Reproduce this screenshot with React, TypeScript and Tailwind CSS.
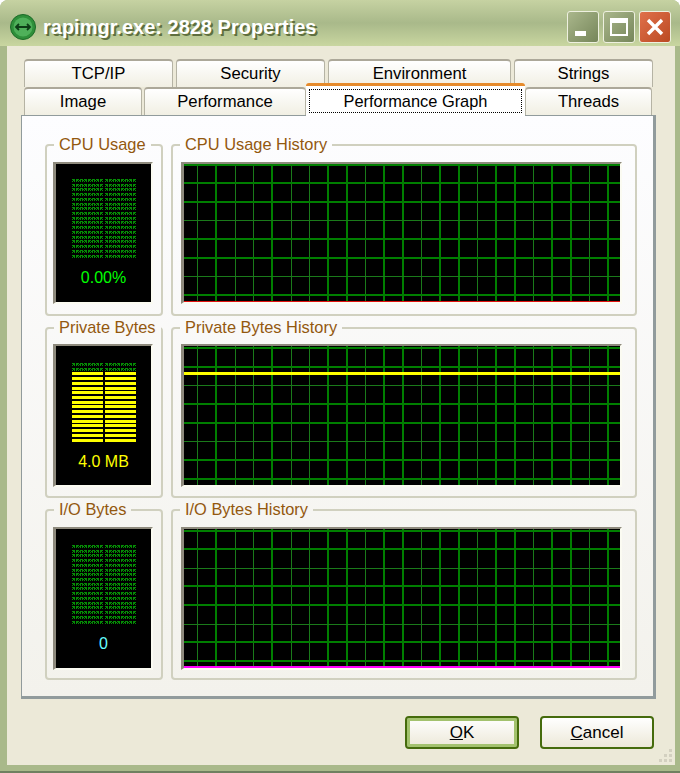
const font = "[font-family:'Liberation_Sans',Arial,sans-serif]";

// thin grid lines picked off the screenshot, the rest are 2px
const thinCols = [0, 2, 3, 5, 6, 9, 12, 15, 18, 21];

function Meter({ lit, color }: { lit: number; color: string }) {
  const rows = Array.from({ length: 17 }, (_, i) => i);
  return (
    <svg width="64" height="81" viewBox="0 0 64 81" className="shrink-0">
      {rows.map(i => {
        const y = Math.round(i * 4.72);
        if (i >= 17 - lit) {
          return (
            <g key={i} fill={color}>
              <rect x="0" y={y} width="31" height="3" />
              <rect x="33" y={y} width="31" height="3" />
            </g>
          );
        }
        return (
          <g key={i} stroke="#058a05" fill="none">
            {[0, 33].map(x => (
              <g key={x}>
                <line x1={x} x2={x + 31} y1={y + 0.5} y2={y + 0.5} strokeDasharray="3 1" />
                <line x1={x + 1} x2={x + 31} y1={y + 1.5} y2={y + 1.5} strokeDasharray="2 1" />
                <line x1={x} x2={x + 31} y1={y + 2.5} y2={y + 2.5} strokeDasharray="1 1" />
              </g>
            ))}
          </g>
        );
      })}
    </svg>
  );
}

function Graph({ rows, h, line, lineY, lineH }: { rows: [number, number][]; h: number; line: string; lineY: number; lineH: number }) {
  const cols = Array.from({ length: 23 }, (_, i) => i);
  return (
    <svg width="436" height={h} viewBox={`0 0 436 ${h}`} className="block bg-black">
      {cols.map(i => {
        const thin = thinCols.includes(i);
        const x = Math.round(13.4 + i * 18.67) + (thin ? 0.5 : 0);
        return <line key={i} x1={x} x2={x} y1="0" y2={h} stroke={thin ? '#1a7a1a' : '#007f00'} strokeWidth={thin ? 1 : 2} />;
      })}
      {rows.map(([y, w]) => {
        const ry = Math.round(y) + (w === 1 ? 0.5 : 0);
        return <line key={y} x1="0" x2="436" y1={ry} y2={ry} stroke={w === 1 ? '#1a7a1a' : '#007f00'} strokeWidth={w} />;
      })}
      <rect x="0" y={lineY} width="436" height={lineH} fill={line} />
    </svg>
  );
}

function Group({ title, className, children }: { title: string; className: string; children: React.ReactNode }) {
  return (
    <fieldset className={`min-w-0 border-2 border-[#d0d0bf] rounded-[4px] ${className}`}>
      <legend className="ml-[7px] px-[5px] h-5 leading-[18px] text-[16.4px] text-[#93580f] whitespace-nowrap">{title}</legend>
      {children}
    </fieldset>
  );
}

const sections = [
  {
    usage: 'CPU Usage', history: 'CPU Usage History', rowH: 'h-[181px]', pad: 'pt-[7px]', boxH: 'h-[142px]', meterTop: 'pt-[15px]',
    value: '0.00%', valueColor: 'text-[#00ff00]', lit: 0, litColor: '#ffff00', graphH: 138, line: '#e01010', lineY: 137, lineH: 1,
    rows: [[1, 2], [19, 2], [38, 2], [56, 1], [75, 2], [94, 2], [112, 1], [131, 2]] as [number, number][],
  },
  {
    usage: 'Private Bytes', history: 'Private Bytes History', rowH: 'h-[180px]', pad: 'pt-[6px]', boxH: 'h-[143px]', meterTop: 'pt-[17px]',
    value: '4.0 MB', valueColor: 'text-[#ffff00]', lit: 15, litColor: '#ffff00', graphH: 139, line: '#ffff00', lineY: 26, lineH: 3,
    rows: [[2, 2], [21, 2], [39, 1], [58, 2], [77, 2], [95, 1], [114, 2], [133, 2]] as [number, number][],
  },
  {
    usage: 'I/O Bytes', history: 'I/O Bytes History', rowH: 'h-[180px]', pad: 'pt-[7px]', boxH: 'h-[143px]', meterTop: 'pt-[16px]',
    value: '0', valueColor: 'text-[#66ffff]', lit: 0, litColor: '#ffff00', graphH: 139, line: '#ff00ff', lineY: 137, lineH: 2,
    rows: [[1.5, 2], [20, 2], [38.5, 1], [57, 2], [76, 2], [94.5, 1], [113, 2], [132, 2]] as [number, number][],
  },
];

function Tab({ label, className }: { label: string; className: string }) {
  return (
    <div className={`flex items-center justify-center border-t-2 border-x border-t-[#aca899] border-x-[#b5b3a4] rounded-t-[4px] bg-gradient-to-b from-white to-[#f1efe3] text-[16.7px] text-black ${className}`}>
      {label}
    </div>
  );
}

function CaptionButton({ className, children }: { className: string; children: React.ReactNode }) {
  return (
    <div className={`w-8 h-8 flex items-center justify-center border border-[#eef0e0] rounded-[3px] ${className}`}>
      {children}
    </div>
  );
}

export default function App() {
  return (
    <div className={`${font} w-[680px] h-[773px] flex flex-col overflow-hidden rounded-t-[8px] bg-[#a9b98a] border-b-2 border-b-[#6f8060]`}>
      {/* title bar */}
      <div className="h-[46px] shrink-0 flex items-center pt-[7px] pl-[10px] pr-[9px] bg-gradient-to-b from-[#c6d2a2] via-[#a9b98a] to-[#c9d6a0]">
        <svg width="26" height="26" viewBox="0 0 26 26" className="shrink-0">
          <circle cx="13" cy="13" r="12.5" fill="#2f8f3a" stroke="#1c6b28" />
          <circle cx="13" cy="13" r="9.5" fill="#4fb05a" />
          <path d="M6 13h14M9 10l-3 3 3 3M17 10l3 3-3 3" fill="none" stroke="#0d3d16" strokeWidth="1.8" />
        </svg>
        <span className="ml-[7px] text-[20px] font-bold text-white [text-shadow:2px_2px_0_#5f6f3f]">rapimgr.exe: 2828 Properties</span>
        <div className="ml-auto flex gap-[4px]">
          <CaptionButton className="bg-gradient-to-br from-[#aab78c] to-[#76865a]">
            <div className="w-[11px] h-[5px] bg-white mt-[13px] -ml-[5px]" />
          </CaptionButton>
          <CaptionButton className="bg-gradient-to-br from-[#aab78c] to-[#76865a]">
            <div className="w-[18px] h-[18px] border-2 border-t-[5px] border-white" />
          </CaptionButton>
          <CaptionButton className="bg-gradient-to-br from-[#e0704a] to-[#bb4a22]">
            <svg width="18" height="18" viewBox="0 0 18 18">
              <path d="M2 2l14 14M16 2L2 16" stroke="#fff" strokeWidth="3.4" />
            </svg>
          </CaptionButton>
        </div>
      </div>

      {/* dialog body */}
      <div className="ml-[7px] mr-[5px] w-[668px] h-[719px] bg-[#ece9d8] pt-[13px] pl-[14px]">
        <div className="flex gap-[3px] pl-[3px] h-[28px]">
          <Tab label="TCP/IP" className="w-[149px]" />
          <Tab label="Security" className="w-[149px]" />
          <Tab label="Environment" className="w-[183px]" />
          <Tab label="Strings" className="w-[139px]" />
        </div>
        <div className="flex pl-[3px] h-[28px]">
          <Tab label="Image" className="w-[118px] mr-[2px]" />
          <Tab label="Performance" className="w-[162px]" />
          <div className="relative z-10 w-[219px] h-[33px] -mt-[4px] bg-white border-t-[3px] border-[#e68b2c] rounded-t-[3px] pt-[3px] px-[3px] text-[16.4px] text-black">
            <div className="h-[24px] flex items-center justify-center border border-dotted border-black">Performance Graph</div>
          </div>
          <Tab label="Threads" className="w-[127px]" />
        </div>
        <div className="w-[635px] h-[584px] border border-[#919b9c] border-r-[3px] border-b-[3px] bg-gradient-to-b from-[#fdfdff] to-[#f3f2ec] pt-[19px] pl-[23px]">
          <div className="flex flex-col gap-[2px]">
            {sections.map(s => (
              <div key={s.usage} className="flex gap-[8px]">
                <Group title={s.usage} className={`w-[118px] ${s.rowH}`}>
                  <div className={`${s.pad} pl-[6px]`}>
                    <div className={`w-[100px] ${s.boxH} border-l-[3px] border-t-2 border-r-2 border-b-2 border-l-[#8e8a7d] border-t-[#8e8a7d] border-r-[#fbfbf2] border-b-[#fbfbf2] bg-black flex flex-col items-center ${s.meterTop}`}>
                      <Meter lit={s.lit} color={s.litColor} />
                      <div className={`mt-2 h-5 leading-5 text-[16px] ${s.valueColor}`}>{s.value}</div>
                    </div>
                  </div>
                </Group>
                <Group title={s.history} className={`w-[466px] ${s.rowH}`}>
                  <div className={`${s.pad} pl-[8px]`}>
                    <div className={`w-[441px] ${s.boxH} border-l-[3px] border-t-2 border-r-2 border-b-2 border-l-[#8e8a7d] border-t-[#8e8a7d] border-r-[#fbfbf2] border-b-[#fbfbf2] bg-black`}>
                      <Graph rows={s.rows} h={s.graphH} line={s.line} lineY={s.lineY} lineH={s.lineH} />
                    </div>
                  </div>
                </Group>
              </div>
            ))}
          </div>
        </div>

        {/* OK / Cancel */}
        <div className="relative mt-[17px] pl-[384px] flex gap-[21px]">
          <button className="w-[114px] h-[33px] rounded-[4px] border-2 border-[#456b0c] shadow-[inset_0_0_0_3px_#a3c26e] bg-gradient-to-b from-white to-[#ece8d8] text-[17px] text-black"><u>O</u>K</button>
          <button className="w-[114px] h-[33px] rounded-[4px] border-2 border-[#456b0c] bg-gradient-to-b from-white to-[#ece8d8] text-[17px] text-black"><u>C</u>ancel</button>
          <svg width="18" height="18" viewBox="0 0 18 18" className="absolute left-[635px] top-[33px]" fill="#d3d0c0">
            <rect x="13" y="0" width="3" height="3" />
            <rect x="8" y="5" width="3" height="3" />
            <rect x="13" y="5" width="3" height="3" />
            <rect x="3" y="10" width="3" height="3" />
            <rect x="8" y="10" width="3" height="3" />
            <rect x="13" y="10" width="3" height="3" />
          </svg>
        </div>
      </div>
    </div>
  );
}
